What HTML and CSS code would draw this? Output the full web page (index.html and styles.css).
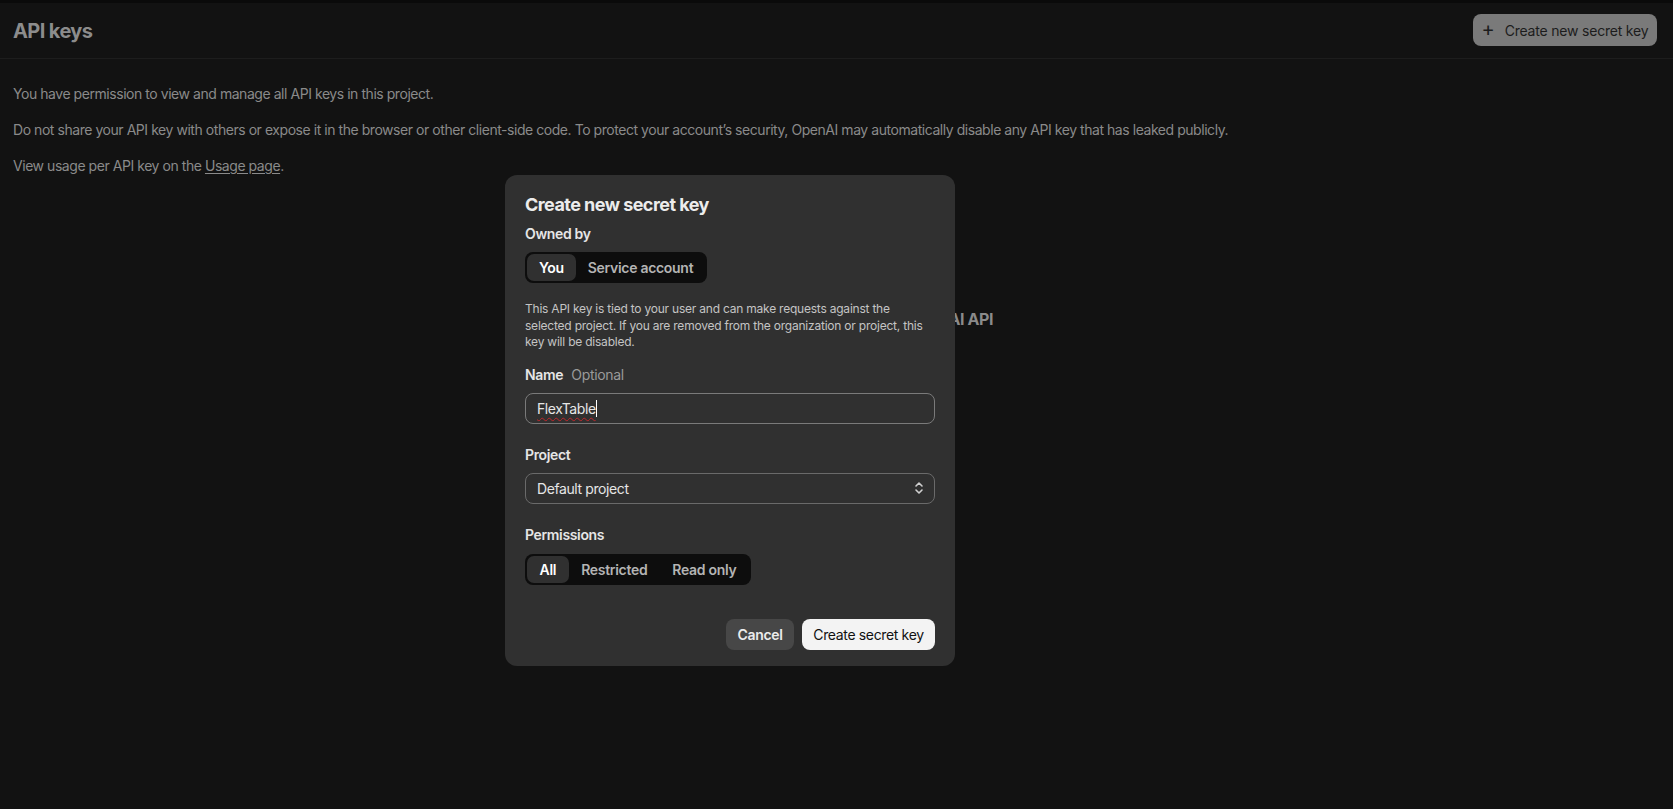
FILE: index.html
```html
<!DOCTYPE html>
<html>
<head>
<meta charset="utf-8">
<link rel="stylesheet" href="styles.css">
</head>
<body>
<div class="topstrip"></div>
<header class="header">
  <h1 class="title">API keys</h1>
  <button class="new-btn"><span class="plus">+</span>Create new secret key</button>
</header>
<main class="content">
  <p>You have permission to view and manage all API keys in this project.</p>
  <p>Do not share your API key with others or expose it in the browser or other client-side code. To protect your account’s security, OpenAI may automatically disable any API key that has leaked publicly.</p>
  <p>View usage per API key on the <a class="link">Usage page</a>.</p>
  <div class="empty">Create an API key to access the OpenAI API</div>
</main>

<div class="modal">
  <h2 class="modal-title">Create new secret key</h2>
  <div class="label">Owned by</div>
  <div class="seg">
    <span class="seg-item active">You</span>
    <span class="seg-item">Service account</span>
  </div>
  <p class="desc">This API key is tied to your user and can make requests against the selected project. If you are removed from the organization or project, this key will be disabled.</p>
  <div class="label label-name">Name <span class="opt">Optional</span></div>
  <div class="input"><span class="typed">FlexTable</span><span class="caret"></span></div>
  <div class="label label-proj">Project</div>
  <div class="input select">
    <span>Default project</span>
    <svg class="chev" width="10" height="14" viewBox="0 0 10 14" fill="none" stroke="#d0d0d0" stroke-width="1.6" stroke-linecap="round" stroke-linejoin="round"><path d="M2 5 L5 2 L8 5"/><path d="M2 9 L5 12 L8 9"/></svg>
  </div>
  <div class="label label-perm">Permissions</div>
  <div class="seg seg-perm">
    <span class="seg-item active">All</span>
    <span class="seg-item">Restricted</span>
    <span class="seg-item">Read only</span>
  </div>
  <div class="actions">
    <button class="btn cancel">Cancel</button>
    <button class="btn primary">Create secret key</button>
  </div>
</div>
</body>
</html>
```

FILE: styles.css
```css
* { box-sizing: border-box; }
html, body { margin: 0; padding: 0; }
body {
  background: #121212;
  font-family: Inter, "Noto Sans", sans-serif;
  color: #8a8a8a;
  height: 809px;
  overflow: hidden;
  position: relative;
  letter-spacing: -0.03em;
}
.topstrip { height: 3px; background: #0a0a0a; }
.header {
  height: 56px;
  border-bottom: 1px solid #1d1d1d;
  display: flex;
  align-items: center;
  justify-content: space-between;
  padding: 0 16px 0 13px;
}
.title {
  margin: 0;
  font-size: 20px;
  font-weight: 700;
  color: #8c8c8c;
  letter-spacing: -0.6px;
  margin-top: 1px;
}
.new-btn {
  height: 32px;
  width: 184px;
  border: none;
  border-radius: 8px;
  background: #7a7a7a;
  color: #1c1c1c;
  font-family: inherit;
  font-size: 14px;
  letter-spacing: -0.2px;
  display: flex;
  align-items: center;
  justify-content: center;
  gap: 10px;
  margin-top: -1px;
  white-space: nowrap;
}
.plus { font-size: 20px; font-weight: 400; line-height: 1; margin-top: -2px; }
.content {
  padding: 24px 13px;
  font-size: 14px;
  position: relative;
  height: 740px;
}
.content p { margin: 0 0 15px; line-height: 21px; letter-spacing: -0.45px; }
.link { text-decoration: underline; text-underline-offset: 2px; color: #8a8a8a; }
.empty {
  position: absolute;
  top: 250px;
  left: 0; right: 8px;
  text-align: center;
  font-size: 16px;
  font-weight: 700;
  color: #8a8a8a;
  letter-spacing: -0.4px;
}

.modal {
  position: absolute;
  left: 505px;
  top: 175px;
  width: 450px;
  height: 491px;
  background: #303030;
  border-radius: 12px;
  padding: 18px 20px 16px;
  color: #ececec;
  display: flex;
  flex-direction: column;
  align-items: flex-start;
}
.modal-title {
  margin: 0;
  font-size: 18px;
  font-weight: 700;
  line-height: 24px;
  letter-spacing: -0.55px;
}
.label {
  font-size: 14px;
  font-weight: 600;
  line-height: 20px;
  margin-top: 7px;
  color: #e6e6e6;
  letter-spacing: -0.35px;
}
.label-name { margin-top: 14px; }
.label-proj { margin-top: 21px; }
.label-perm { margin-top: 21px; }
.opt { font-weight: 400; color: #9a9a9a; margin-left: 5px; }
.seg {
  margin-top: 8px;
  background: #0d0d0d;
  border-radius: 8px;
  padding: 2px;
  display: flex;
  height: 31px;
}
.seg-perm { margin-top: 9px; }
.seg-item {
  padding: 0 12px;
  display: flex;
  align-items: center;
  font-size: 14px;
  font-weight: 600;
  color: #b4b4b4;
  border-radius: 7px;
  letter-spacing: -0.3px;
}
.seg-perm .seg-item { padding: 0 12.5px; }
.seg-item.active { background: #303030; color: #fff; }
.desc {
  margin: 18px 0 0;
  max-width: 400px;
  font-size: 12px;
  line-height: 16.5px;
  color: #c4c4c4;
  letter-spacing: -0.22px;
}
.input {
  margin-top: 8px;
  width: 410px;
  height: 31px;
  border: 1px solid #7a7a7a;
  border-radius: 8px;
  display: flex;
  align-items: center;
  padding: 0 11px;
  font-size: 14px;
  color: #e6e6e6;
  letter-spacing: -0.4px;
}
.typed { text-decoration: underline wavy #c0262b 1px; text-underline-offset: 3px; text-decoration-skip-ink: none; }
.caret { width: 1px; height: 17px; background: #fff; margin-left: 0; }
.select { justify-content: space-between; border-color: #6a6a6a; padding-right: 10px; }
.chev { display: block; }
.actions {
  margin-top: auto;
  align-self: stretch;
  display: flex;
  justify-content: flex-end;
  gap: 8px;
}
.btn {
  height: 31px;
  border: none;
  border-radius: 8px;
  font-family: inherit;
  font-size: 14px;
  padding: 0 10px;
  white-space: nowrap;
  letter-spacing: -0.35px;
}
.cancel { background: #474747; color: #ececec; font-weight: 600; width: 68px; }
.primary { background: #f3f3f3; color: #111; width: 133px; }
```
